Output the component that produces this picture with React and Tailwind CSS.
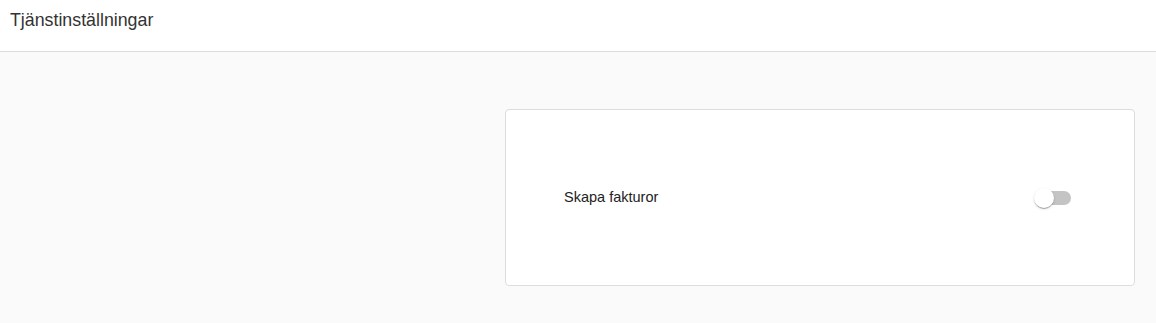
export default function App() {
  return (
    <div className="min-h-[323px] bg-[#fafafa] font-['Liberation_Sans',Arial,sans-serif]">
      <header className="h-[52px] bg-white border-b border-[#dddddd] px-[10px] pt-[9px]">
        <h1 className="text-[17.8px] leading-[22px] text-[#333333]">Tjänstinställningar</h1>
      </header>
      <div className="flex justify-end pt-[57px] pr-[21px]">
        <div className="w-[630px] h-[177px] bg-white border border-[#dddddd] rounded-[4px] flex items-center justify-between pl-[58px] pr-[63px]">
          <span className="text-[14.5px] text-[#222222]">Skapa fakturor</span>
          <div className="relative w-[34px] h-[14px]">
            <div className="absolute inset-0 rounded-full bg-[#c4c4c4]" />
            <div className="absolute left-[-3px] top-[-3px] w-[20px] h-[20px] rounded-full bg-white shadow-[0_2px_1px_-1px_rgba(0,0,0,0.2),0_1px_1px_0_rgba(0,0,0,0.14),0_1px_3px_0_rgba(0,0,0,0.12)]" />
          </div>
        </div>
      </div>
    </div>
  )
}
